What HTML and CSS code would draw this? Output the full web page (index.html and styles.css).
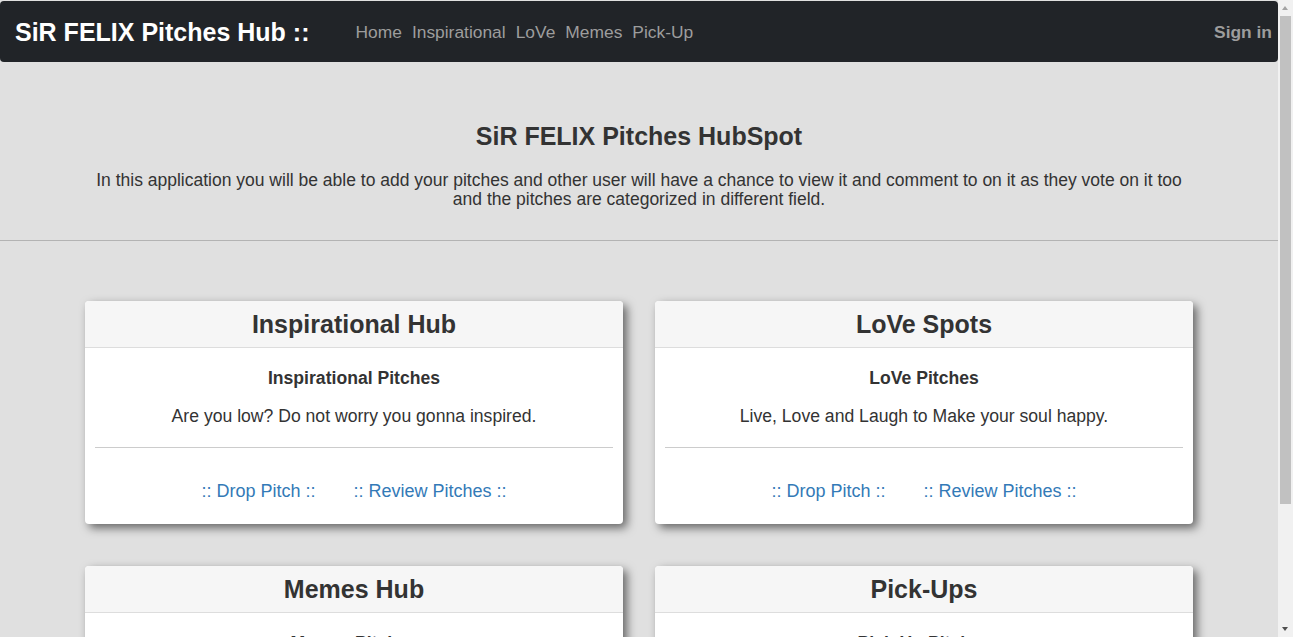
FILE: index.html
```html
<!DOCTYPE html>
<html lang="en">
<head>
<meta charset="utf-8">
<title>SiR FELIX Pitches Hub</title>
<link rel="stylesheet" href="styles.css">
</head>
<body>
<nav class="navbar">
  <div class="nav-left">
    <a class="brand" href="#">SiR FELIX Pitches Hub ::</a>
    <ul class="nav-links">
      <li><a href="#">Home</a></li>
      <li><a href="#">Inspirational</a></li>
      <li><a href="#">LoVe</a></li>
      <li><a href="#">Memes</a></li>
      <li><a href="#">Pick-Up</a></li>
    </ul>
  </div>
  <a class="signin" href="#">Sign in</a>
</nav>

<header class="intro">
  <h1 class="intro-title">SiR FELIX Pitches HubSpot</h1>
  <p class="intro-text">In this application you will be able to add your pitches and other user will have a chance to view it and comment to on it as they vote on it too and the pitches are categorized in different field.</p>
</header>
<hr class="page-rule">

<main class="cards">
  <section class="card">
    <div class="card-head"><h3>Inspirational Hub</h3></div>
    <div class="card-body">
      <h4>Inspirational Pitches</h4>
      <p>Are you low? Do not worry you gonna inspired.</p>
      <hr>
      <div class="card-links"><a href="#">:: Drop Pitch ::</a><a href="#">:: Review Pitches ::</a></div>
    </div>
  </section>
  <section class="card">
    <div class="card-head"><h3>LoVe Spots</h3></div>
    <div class="card-body">
      <h4>LoVe Pitches</h4>
      <p>Live, Love and Laugh to Make your soul happy.</p>
      <hr>
      <div class="card-links"><a href="#">:: Drop Pitch ::</a><a href="#">:: Review Pitches ::</a></div>
    </div>
  </section>
  <section class="card">
    <div class="card-head"><h3>Memes Hub</h3></div>
    <div class="card-body">
      <h4>Memes Pitches</h4>
      <p>Laugh out loud with the funniest memes around.</p>
      <hr>
      <div class="card-links"><a href="#">:: Drop Pitch ::</a><a href="#">:: Review Pitches ::</a></div>
    </div>
  </section>
  <section class="card">
    <div class="card-head"><h3>Pick-Ups</h3></div>
    <div class="card-body">
      <h4>Pick-Up Pitches</h4>
      <p>Smooth lines to win that special someone.</p>
      <hr>
      <div class="card-links"><a href="#">:: Drop Pitch ::</a><a href="#">:: Review Pitches ::</a></div>
    </div>
  </section>
</main>

<div class="scrollbar" aria-hidden="true">
  <span class="sb-arrow sb-up"></span>
  <span class="sb-thumb"></span>
  <span class="sb-arrow sb-down"></span>
</div>
</body>
</html>
```

FILE: styles.css
```css
html, body {
  margin: 0;
  padding: 0;
}
body {
  background: #e0e0e0;
  font-family: "Liberation Sans", Arial, sans-serif;
  color: #333333;
  font-size: 16px;
  margin-right: 15px;
}
a { text-decoration: none; }

.navbar {
  margin-top: 1px;
  height: 61px;
  background: #212428;
  border-radius: 4px;
  display: flex;
  align-items: center;
  justify-content: space-between;
  padding: 2px 6px 0 15px;
  box-sizing: border-box;
}
.nav-left {
  display: flex;
  align-items: center;
}
.brand {
  color: #ffffff;
  font-weight: bold;
  font-size: 25px;
  margin-right: 46px;
}
.nav-links {
  list-style: none;
  margin: 0;
  padding: 0;
  display: flex;
  gap: 10px;
}
.nav-links a {
  color: #9d9d9d;
  font-size: 17.4px;
}
.signin {
  color: #9d9d9d;
  font-size: 17.4px;
  font-weight: bold;
}

.intro {
  text-align: center;
  padding: 61px 84px 0;
}
.intro-title {
  margin: 0;
  font-size: 25px;
  line-height: 27px;
  color: #333;
}
.intro-text {
  margin: 21px 0 0;
  font-size: 17.5px;
  line-height: 19px;
}
.page-rule {
  margin: 31px 0 0;
  border: 0;
  border-top: 1px solid #b3b3b3;
}

.cards {
  width: 1108px;
  margin: 60px auto 0;
  display: grid;
  grid-template-columns: 1fr 1fr;
  column-gap: 32px;
  row-gap: 42px;
  padding-bottom: 40px;
}
.card {
  background: #fff;
  border-radius: 4px;
  box-shadow: 4px 4px 10px rgba(0, 0, 0, 0.55);
  overflow: hidden;
}
.card-head {
  background: #f6f6f6;
  border-bottom: 1px solid #dddddd;
  height: 46px;
  display: flex;
  align-items: center;
  justify-content: center;
}
.card-head h3 {
  margin: 0;
  font-size: 25px;
  font-weight: bold;
  color: #333;
}
.card-body {
  padding: 20px 10px 23px;
  text-align: center;
}
.card-body h4 {
  margin: 0;
  font-size: 17.6px;
  line-height: 20px;
  font-weight: bold;
}
.card-body p {
  margin: 18px 0 0;
  font-size: 17.6px;
  line-height: 20px;
}
.card-body hr {
  margin: 21px 0 0;
  border: 0;
  border-top: 1px solid #cccccc;
}
.card-links {
  margin-top: 33px;
  display: flex;
  justify-content: center;
  gap: 38px;
  line-height: 20px;
}
.card-links a {
  color: #337ab7;
  font-size: 18px;
}

.scrollbar {
  position: fixed;
  top: 0;
  right: 0;
  width: 15px;
  height: 100vh;
  background: #f1f1f1;
}
.sb-thumb {
  position: absolute;
  left: 2px;
  top: 16px;
  width: 11px;
  height: 488px;
  background: #c1c1c1;
}
.sb-arrow {
  position: absolute;
  left: 4px;
  width: 0;
  height: 0;
  border-left: 3.5px solid transparent;
  border-right: 3.5px solid transparent;
}
.sb-up {
  top: 6px;
  border-bottom: 4px solid #a3a3a3;
}
.sb-down {
  bottom: 6px;
  border-top: 4px solid #505050;
}
```
